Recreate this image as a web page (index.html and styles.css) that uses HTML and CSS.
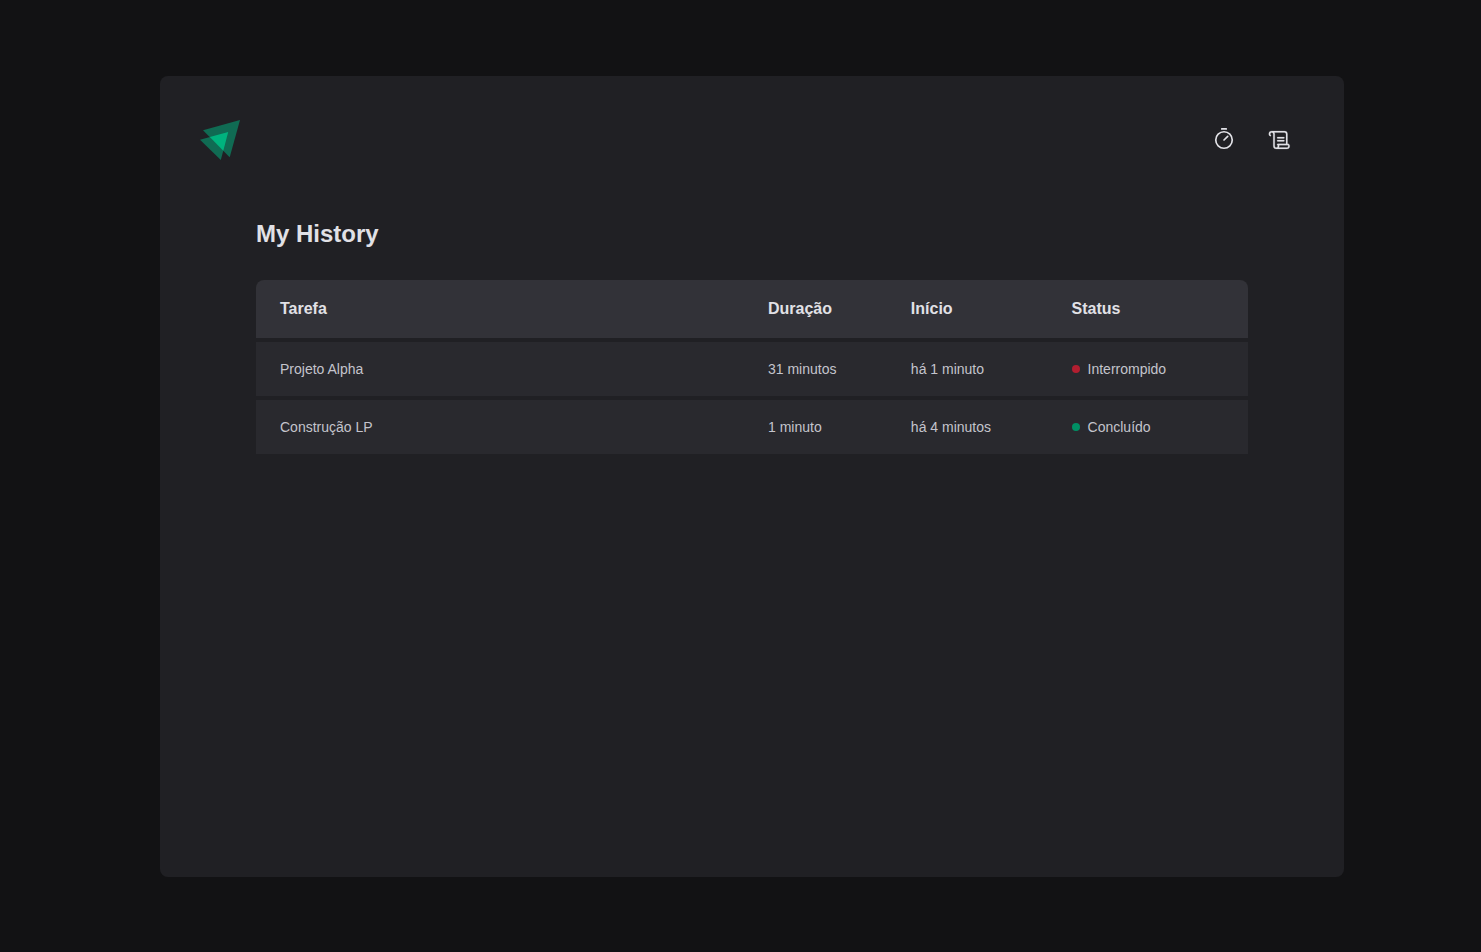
FILE: index.html
```html
<!DOCTYPE html>
<html lang="pt-BR">
<head>
  <meta charset="utf-8">
  <meta name="viewport" content="width=device-width, initial-scale=1">
  <title>My History</title>
  <link rel="stylesheet" href="styles.css">
</head>
<body>
  <div class="layout">
    <header class="header">
      <svg class="logo" viewBox="0 0 40 40" aria-hidden="true">
        <path class="logo-shade" d="M3 10.2L40 0L29.7 37.2Z"/>
        <path class="logo-shade" d="M0 19.8L28.2 12L20.8 40Z"/>
        <path class="logo-core" d="M9.8 17L28.2 12L23.3 30.7Z"/>
      </svg>
      <nav class="nav">
        <a class="nav-link" href="#timer" title="Timer" aria-label="Timer">
          <svg class="icon" viewBox="0 0 256 256" fill="none" stroke="currentColor" stroke-width="18" stroke-linecap="round">
            <circle cx="128" cy="128" r="88"/>
            <path d="M128 128L167.6 88.4M104 10H152"/>
          </svg>
        </a>
        <a class="nav-link" href="#history" title="Histórico" aria-label="Histórico">
          <svg class="icon" viewBox="0 0 256 256" fill="currentColor" stroke="currentColor" stroke-width="2">
            <path d="M96,104a8,8,0,0,1,8-8h64a8,8,0,0,1,0,16H104A8,8,0,0,1,96,104Zm8,40h64a8,8,0,0,0,0-16H104a8,8,0,0,0,0,16Zm128,48a32,32,0,0,1-32,32H88a32,32,0,0,1-32-32V64a16,16,0,0,0-32,0c0,5.74,4.83,9.62,4.88,9.66h0A8,8,0,0,1,24,88a7.89,7.89,0,0,1-4.79-1.61h0C18.05,85.54,8,77.61,8,64A32,32,0,0,1,40,32H176a32,32,0,0,1,32,32V168h8a8,8,0,0,1,4.8,1.6C222,170.46,232,178.39,232,192ZM96.26,173.48A8.07,8.07,0,0,1,104,168h88V64a16,16,0,0,0-16-16H67.69A31.71,31.71,0,0,1,72,64V192a16,16,0,0,0,32,0c0-5.74-4.83-9.62-4.88-9.66A7.82,7.82,0,0,1,96.26,173.48ZM216,192a12.58,12.58,0,0,0-3.23-8h-94a26.92,26.92,0,0,1,1.21,8,31.82,31.82,0,0,1-4.29,16H200A16,16,0,0,0,216,192Z"/>
          </svg>
        </a>
      </nav>
    </header>
    <main class="history">
      <h1 class="title">My History</h1>
      <table class="table">
        <colgroup>
          <col class="col-task">
          <col class="col-duration">
          <col class="col-start">
          <col>
        </colgroup>
        <thead>
          <tr>
            <th scope="col">Tarefa</th>
            <th scope="col">Duração</th>
            <th scope="col">Início</th>
            <th scope="col">Status</th>
          </tr>
        </thead>
        <tbody>
          <tr>
            <td>Projeto Alpha</td>
            <td>31 minutos</td>
            <td>há 1 minuto</td>
            <td><span class="status status-red">Interrompido</span></td>
          </tr>
          <tr>
            <td>Construção LP</td>
            <td>1 minuto</td>
            <td>há 4 minutos</td>
            <td><span class="status status-green">Concluído</span></td>
          </tr>
        </tbody>
      </table>
    </main>
  </div>
</body>
</html>
```

FILE: styles.css
```css
* {
  box-sizing: border-box;
  margin: 0;
  padding: 0;
}

body {
  display: flex;
  min-height: 100vh;
  padding: 76px 137px 75px 160px;
  background: #121214;
  color: #e1e1e6;
  font-family: "Liberation Sans", Arial, sans-serif;
  font-size: 16px;
}

.layout {
  display: flex;
  flex: 1;
  flex-direction: column;
  min-width: 0;
  padding: 40px;
  border-radius: 8px;
  background: #202024;
}

.header {
  display: flex;
  align-items: center;
  justify-content: space-between;
}

.logo {
  width: 40px;
  height: 40px;
}

.logo-shade {
  fill: #106b53;
}

.logo-core {
  fill: #00b37e;
}

.nav {
  display: flex;
  gap: 8px;
}

.nav-link {
  display: flex;
  align-items: center;
  justify-content: center;
  width: 48px;
  height: 48px;
  color: #e1e1e6;
}

.icon {
  width: 24px;
  height: 24px;
}

.history {
  flex: 1;
  padding: 56px;
}

.title {
  font-size: 24px;
  line-height: 28px;
}

.table {
  width: 100%;
  margin-top: 32px;
  border-spacing: 0;
  table-layout: fixed;
  text-align: left;
}

.col-task {
  width: 50%;
}

.col-duration {
  width: 14.4%;
}

.col-start {
  width: 16.2%;
}

.table th {
  padding: 16px;
  background: #323238;
  line-height: 26px;
}

.table td {
  padding: 16px;
  border-top: 4px solid #202024;
  background: #29292e;
  color: #c4c4cc;
  font-size: 14px;
  line-height: 22px;
}

.table th:first-child,
.table td:first-child {
  padding-left: 24px;
}

.table th:first-child {
  border-top-left-radius: 8px;
}

.table th:last-child {
  border-top-right-radius: 8px;
}

.status {
  display: flex;
  align-items: center;
  gap: 8px;
}

.status::before {
  content: "";
  width: 8px;
  height: 8px;
  border-radius: 50%;
}

.status-red::before {
  background: #b21e30;
}

.status-green::before {
  background: #008f64;
}
```
